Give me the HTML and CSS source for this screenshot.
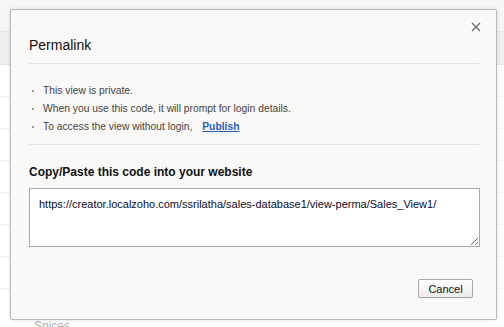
FILE: index.html
```html
<!DOCTYPE html>
<html>
<head>
<meta charset="utf-8">
<link rel="stylesheet" href="styles.css">
</head>
<body>
<div class="page">
  <div class="topbar"></div>
  <div class="band"></div>
  <div class="row"></div>
  <div class="row"></div>
  <div class="row"></div>
  <div class="row"></div>
  <div class="row"></div>
  <div class="row"></div>
  <div class="row"></div>
  <div class="row spices">Spices</div>
</div>

<div class="dialog">
  <button class="close" aria-label="Close">
    <svg width="10" height="10" viewBox="0 0 10 10"><path d="M1 1L9 9M9 1L1 9" stroke="#6f6f6f" stroke-width="1.4" fill="none"/></svg>
  </button>
  <h1 class="title">Permalink</h1>
  <ul class="notes">
    <li>This view is private.</li>
    <li>When you use this code, it will prompt for login details.</li>
    <li>To access the view without login, <a href="#" class="publish">Publish</a></li>
  </ul>
  <div class="code">
    <div class="code-label">Copy/Paste this code into your website</div>
    <textarea class="code-box" readonly>https://creator.localzoho.com/ssrilatha/sales-database1/view-perma/Sales_View1/</textarea>
  </div>
  <div class="actions">
    <button class="cancel">Cancel</button>
  </div>
</div>
</body>
</html>
```
FILE: styles.css
```css
html, body {
  margin: 0;
  padding: 0;
  width: 504px;
  height: 327px;
  overflow: hidden;
  background: #fff;
  font-family: "Liberation Sans", Arial, sans-serif;
}

.page {
  display: flex;
  flex-direction: column;
}

.topbar {
  height: 31px;
  background: #f6f6f6;
  border-bottom: 1px solid #e6e6e6;
}

.band {
  height: 32px;
  background: #efefef;
  border-bottom: 1px solid #e6e6e6;
}

.row {
  height: 32px;
  border-bottom: 1px solid #f0f0f0;
  padding-left: 34px;
  font-size: 12px;
  color: #b0b0b0;
  box-sizing: border-box;
}

.spices {
  padding-top: 30px;
  height: 50px;
}

.dialog {
  position: absolute;
  left: 10px;
  top: 9px;
  width: 487px;
  height: 311px;
  background: #faf9f8;
  border: 1px solid #b9b9b9;
  border-radius: 2px;
  box-shadow: 0 0 4px rgba(0, 0, 0, 0.12);
  padding: 0 17px 0 18px;
  box-sizing: border-box;
  display: flex;
  flex-direction: column;
}

.close {
  position: absolute;
  right: 15px;
  top: 12px;
  width: 10px;
  height: 10px;
  padding: 0;
  border: 0;
  background: none;
  display: flex;
}

.title {
  margin: 0;
  padding: 28px 0 11px;
  font-size: 14px;
  font-weight: normal;
  color: #111;
  line-height: 14px;
  border-bottom: 1px solid #e4e4e4;
}

.notes {
  list-style: none;
  margin: 0;
  padding: 21px 0 11px;
  border-bottom: 1px solid #e4e4e4;
  display: flex;
  flex-direction: column;
  gap: 6px;
}

.notes li {
  position: relative;
  padding-left: 14px;
  font-size: 10.3px;
  line-height: 12px;
  color: #444;
}

.notes li::before {
  content: "";
  position: absolute;
  left: 3px;
  top: 5px;
  width: 2px;
  height: 2px;
  background: #9a9a9a;
}

.publish {
  margin-left: 7px;
  font-weight: bold;
  color: #2a5db8;
  text-decoration: underline;
}

.code {
  display: flex;
  flex-direction: column;
  padding-top: 21px;
  gap: 9px;
}

.code-label {
  font-size: 12px;
  font-weight: bold;
  color: #111;
  line-height: 13px;
}

.code-box {
  box-sizing: border-box;
  width: 451px;
  height: 59px;
  margin: 0;
  border: 1px solid #a9a9a9;
  background: #fff;
  padding: 9px 9px;
  font-family: "Liberation Sans", Arial, sans-serif;
  font-size: 11px;
  line-height: 12px;
  color: #0b0b2a;
  resize: both;
  outline: none;
}

.actions {
  display: flex;
  justify-content: flex-end;
  padding-top: 32px;
  padding-right: 6px;
}

.cancel {
  width: 55px;
  height: 19px;
  padding: 0;
  border: 1px solid #a8a8a8;
  border-radius: 2px;
  background: linear-gradient(#ffffff, #ececec);
  font-family: "Liberation Sans", Arial, sans-serif;
  font-size: 11px;
  color: #111;
  box-shadow: 0 1px 0 rgba(0, 0, 0, 0.05);
}
```
